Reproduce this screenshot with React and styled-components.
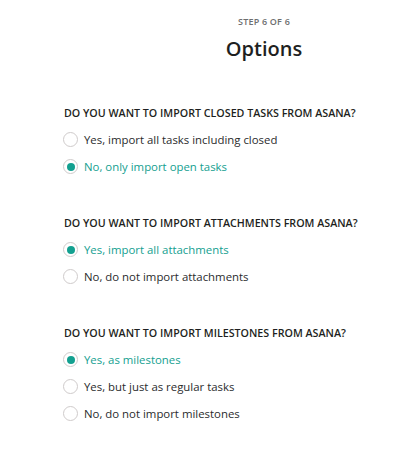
import React, { useState } from 'react'
import styled, { createGlobalStyle } from 'styled-components'

const Global = createGlobalStyle`
  body {
    margin: 0;
    background: #fff;
    font-family: "Segoe UI", "Open Sans", "Noto Sans", sans-serif;
    color: #1e1f21;
  }
`

const Page = styled.div`
  padding: 16px 0 0 64px;
`

const Header = styled.div`
  display: flex;
  flex-direction: column;
  align-items: center;
  padding-left: 49px;
`

const Step = styled.div`
  font-size: 9px;
  font-weight: 600;
  letter-spacing: 0.2px;
  color: #6d6e6f;
  line-height: 12px;
`

const Title = styled.h1`
  margin: 8px 0 0;
  font-size: 20px;
  font-weight: 600;
  line-height: 26px;
  color: #1e1f21;
`

const Section = styled.div`
  display: flex;
  flex-direction: column;
  margin-top: ${p => p.$first ? '42px' : '34px'};
`

const Question = styled.div`
  font-size: 10.7px;
  font-weight: 600;
  line-height: 18px;
  margin-bottom: 4px;
`

const Option = styled.label`
  display: flex;
  align-items: center;
  gap: 6px;
  height: 27px;
  font-size: 11.4px;
  cursor: pointer;
  color: ${p => p.$checked ? '#13a090' : '#2a2b2d'};
`

const Dot = styled.span`
  width: 15px;
  height: 15px;
  margin-left: -1px;
  border: 1px solid #cfcbcb;
  border-radius: 50%;
  box-sizing: border-box;
  display: flex;
  align-items: center;
  justify-content: center;
  background: #fff;
  &::after {
    content: '';
    width: 8px;
    height: 8px;
    border-radius: 50%;
    background: ${p => p.$checked ? '#13a090' : 'transparent'};
  }
`

const questions = [
  {
    q: 'DO YOU WANT TO IMPORT CLOSED TASKS FROM ASANA?',
    options: ['Yes, import all tasks including closed', 'No, only import open tasks'],
    initial: 1,
  },
  {
    q: 'DO YOU WANT TO IMPORT ATTACHMENTS FROM ASANA?',
    options: ['Yes, import all attachments', 'No, do not import attachments'],
    initial: 0,
  },
  {
    q: 'DO YOU WANT TO IMPORT MILESTONES FROM ASANA?',
    options: ['Yes, as milestones', 'Yes, but just as regular tasks', 'No, do not import milestones'],
    initial: 0,
  },
]

const Group = ({ item, first }) => {
  const [value, setValue] = useState(item.initial)
  return (
    <Section $first={first}>
      <Question>{item.q}</Question>
      {item.options.map((o, i) => (
        <Option key={o} $checked={value === i} onClick={() => setValue(i)}>
          <Dot $checked={value === i} />
          {o}
        </Option>
      ))}
    </Section>
  )
}

export default function App() {
  return (
    <>
      <Global />
      <Page>
        <Header>
          <Step>STEP 6 OF 6</Step>
          <Title>Options</Title>
        </Header>
        {questions.map((item, i) => (
          <Group key={item.q} item={item} first={i === 0} />
        ))}
      </Page>
    </>
  )
}
